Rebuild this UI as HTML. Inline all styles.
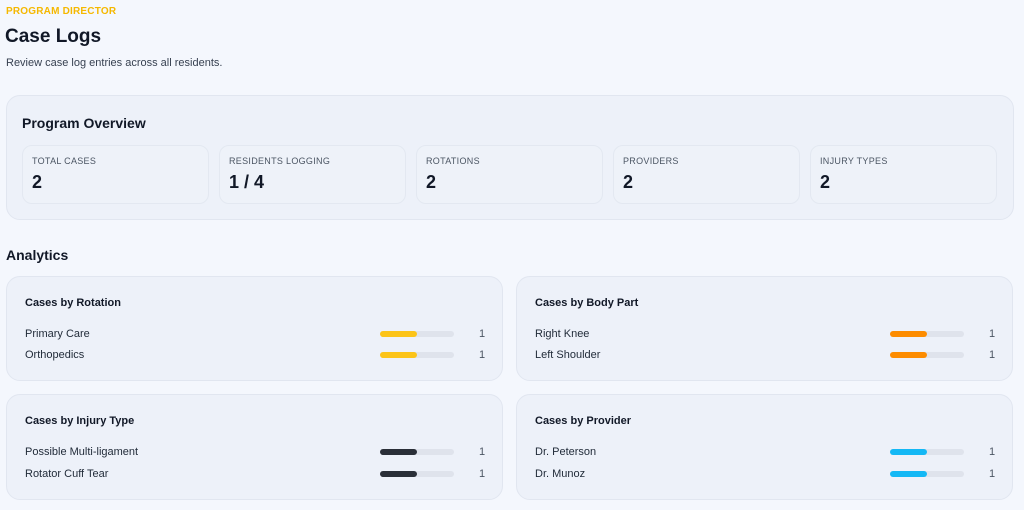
<!DOCTYPE html><html><head><style>
body{margin:0;width:1024px;height:510px;overflow:hidden;background:#f4f7fd;font-family:"Liberation Sans",sans-serif;color:#111827;position:relative}
.a{position:absolute}
.card{position:absolute;background:#edf1f9;border:1px solid #e1e6f0;border-radius:14px;box-sizing:border-box}
.stat{position:absolute;top:49px;width:187px;height:59px;border:1px solid #e3e8f1;border-radius:10px;box-sizing:border-box;background:#eef2f9}
.stat .l{position:absolute;left:9px;top:10px;font-size:9px;color:#4b5563;letter-spacing:.3px}
.stat .v{position:absolute;left:9px;top:26px;font-size:18px;font-weight:bold}
.ct{position:absolute;left:18px;top:20px;font-size:11px;font-weight:bold}
.row{position:absolute;left:18px;font-size:11px;color:#1f2937;width:460px}
.bar{position:absolute;left:355px;top:3px;width:74px;height:6px;border-radius:3px;background:#dfe3ec}
.bar i{display:block;width:37px;height:6px;border-radius:3px}
.n{position:absolute;left:454px;top:0;color:#4b5563}
</style></head><body>
<div class="a" style="left:6px;top:6px;font-size:10px;color:#f5b800;font-weight:bold;letter-spacing:.2px">PROGRAM DIRECTOR</div>
<div class="a" style="left:5px;top:26px;font-size:19px;font-weight:bold">Case Logs</div>
<div class="a" style="left:6px;top:57px;font-size:11px;color:#374151">Review case log entries across all residents.</div>
<div class="card" style="left:6px;top:95px;width:1008px;height:125px">
<div class="a" style="left:15px;top:19px;font-size:14px;font-weight:bold">Program Overview</div>
<div class="stat" style="left:15px"><div class="l">TOTAL CASES</div><div class="v">2</div></div>
<div class="stat" style="left:212px"><div class="l">RESIDENTS LOGGING</div><div class="v">1 / 4</div></div>
<div class="stat" style="left:409px"><div class="l">ROTATIONS</div><div class="v">2</div></div>
<div class="stat" style="left:606px"><div class="l">PROVIDERS</div><div class="v">2</div></div>
<div class="stat" style="left:803px"><div class="l">INJURY TYPES</div><div class="v">2</div></div>
</div>
<div class="a" style="left:6px;top:247px;font-size:14px;font-weight:bold">Analytics</div>
<div class="card" style="left:6px;top:276px;width:497px;height:105px"><div class="ct">Cases by Rotation</div>
<div class="row" style="top:51px">Primary Care<div class="bar"><i style="background:#fcc419"></i></div><div class="n">1</div></div>
<div class="row" style="top:72px">Orthopedics<div class="bar"><i style="background:#fcc419"></i></div><div class="n">1</div></div></div>
<div class="card" style="left:516px;top:276px;width:497px;height:105px"><div class="ct">Cases by Body Part</div>
<div class="row" style="top:51px">Right Knee<div class="bar"><i style="background:#fd8c00"></i></div><div class="n">1</div></div>
<div class="row" style="top:72px">Left Shoulder<div class="bar"><i style="background:#fd8c00"></i></div><div class="n">1</div></div></div>
<div class="card" style="left:6px;top:394px;width:497px;height:106px"><div class="ct">Cases by Injury Type</div>
<div class="row" style="top:51px">Possible Multi-ligament<div class="bar"><i style="background:#2a2f38"></i></div><div class="n">1</div></div>
<div class="row" style="top:73px">Rotator Cuff Tear<div class="bar"><i style="background:#2a2f38"></i></div><div class="n">1</div></div></div>
<div class="card" style="left:516px;top:394px;width:497px;height:106px"><div class="ct">Cases by Provider</div>
<div class="row" style="top:51px">Dr. Peterson<div class="bar"><i style="background:#14b8f5"></i></div><div class="n">1</div></div>
<div class="row" style="top:73px">Dr. Munoz<div class="bar"><i style="background:#14b8f5"></i></div><div class="n">1</div></div></div>
</body></html>
